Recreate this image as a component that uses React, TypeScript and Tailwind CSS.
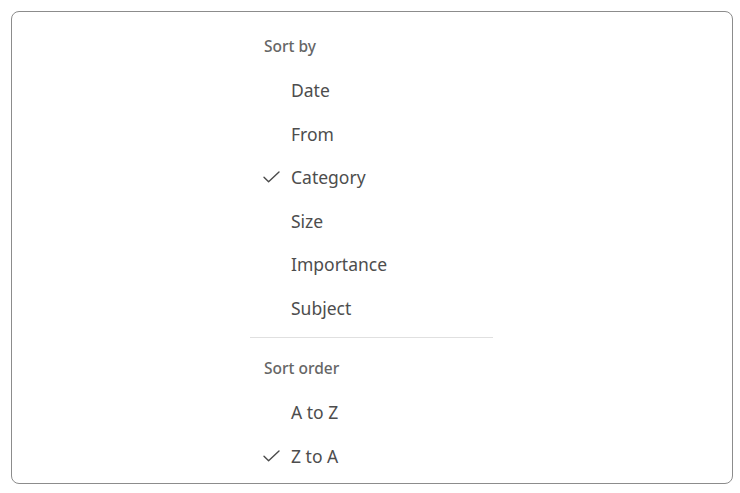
import React from 'react';

const SORT_BY = ['Date', 'From', 'Category', 'Size', 'Importance', 'Subject'];
const SORT_ORDER = ['A to Z', 'Z to A'];

const CheckIcon = () => (
  <svg className="w-[17px] h-[12px]" viewBox="0 0 17 12" fill="none" stroke="#4a4a4a" strokeWidth={1.4} strokeLinecap="round" strokeLinejoin="round">
    <path d="M1 6.2l4.6 4.6L16 1" />
  </svg>
);

const MenuItem = ({ label, checked }: { label: string; checked?: boolean }) => (
  <div className="h-[43.5px] flex items-center">
    <div className="w-[41px] pl-[13px] flex items-center">{checked && <CheckIcon />}</div>
    <span className="text-[17.5px] text-[#4d4d4d]">{label}</span>
  </div>
);

const Header = ({ label }: { label: string }) => (
  <div className="h-[43.5px] flex items-center pl-[14px] text-[15.5px] font-medium text-[#666666]">{label}</div>
);

export default function App() {
  const sortBy = 'Category';
  const order = 'Z to A';

  return (
    <div className="w-[740px] h-[493px] bg-white pt-[11px] pl-[11px] pr-[7px] pb-[9px]" style={{ fontFamily: '"Noto Sans", "Open Sans", sans-serif' }}>
      <div className="h-full border border-[#8c8c8c] rounded-[8px] flex justify-center pt-[13px]">
        <div className="w-[243px] ml-[-1px]">
          <Header label="Sort by" />
          {SORT_BY.map((item) => (
            <MenuItem key={item} label={item} checked={item === sortBy} />
          ))}
          <div className="h-px bg-[#e0e0e0] mt-[7px] mb-[9.5px]" />
          <Header label="Sort order" />
          {SORT_ORDER.map((item) => (
            <MenuItem key={item} label={item} checked={item === order} />
          ))}
        </div>
      </div>
    </div>
  );
}
